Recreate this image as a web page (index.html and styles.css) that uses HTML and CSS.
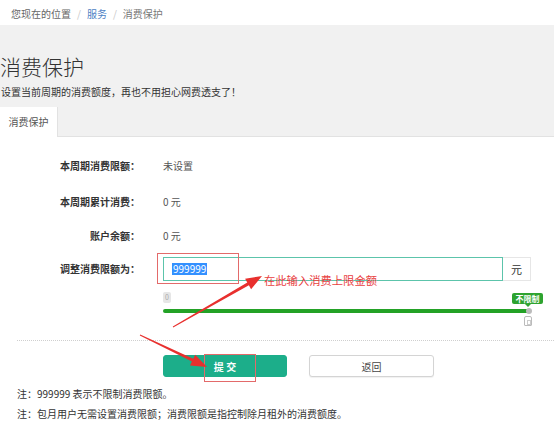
FILE: index.html
```html
<!DOCTYPE html>
<html lang="zh-CN">
<head>
<meta charset="utf-8">
<title>消费保护</title>
<link rel="stylesheet" href="styles.css">
</head>
<body>
<div class="page">
  <div class="crumb">
    <span class="c-here">您现在的位置</span><span class="c-sep">/</span><a class="c-link">服务</a><span class="c-sep">/</span><span class="c-cur">消费保护</span>
  </div>
  <div class="head">
    <h1 class="title">消费保护</h1>
    <p class="sub">设置当前周期的消费额度<span class="p">，</span>再也不用担心网费透支了<span class="p">！</span></p>
    <div class="tabs"><div class="tab">消费保护</div></div>
  </div>
  <div class="form">
    <div class="row r1"><div class="label">本周期消费限额<span class="p">：</span></div><div class="value">未设置</div></div>
    <div class="row r2"><div class="label">本周期累计消费<span class="p">：</span></div><div class="value">0 元</div></div>
    <div class="row r3"><div class="label">账户余额<span class="p">：</span></div><div class="value">0 元</div></div>
    <div class="row r4"><div class="label">调整消费限额为<span class="p">：</span></div>
      <div class="group">
        <div class="input"><span class="sel">999999</span></div>
        <div class="addon">元</div>
      </div>
    </div>
    <div class="slider">
      <div class="min">0</div>
      <div class="track"></div>
      <div class="dot"></div>
      <div class="tip">不限制</div>
      <div class="handle"></div>
    </div>
  </div>
  <div class="divider"></div>
  <div class="actions">
    <button class="btn primary">提 交</button>
    <button class="btn plain">返回</button>
  </div>
  <div class="notes">
    <p>注<span class="p">：</span>999999 表示不限制消费限额。</p>
    <p>注<span class="p">：</span>包月用户无需设置消费限额<span class="p">；</span>消费限额是指控制除月租外的消费额度。</p>
  </div>

  <div class="hint">在此输入消费上限金额</div>
  <svg class="marks" width="554" height="433" viewBox="0 0 554 433">
    <rect x="157.5" y="253.5" width="81" height="30" fill="none" stroke="#e36a6a" stroke-width="1"/>
    <rect x="204.5" y="354.5" width="51" height="27" fill="none" stroke="#e36a6a" stroke-width="1"/>
    <polygon fill="#e8302e" points="173.2,327.4 248.9,285.3 251.1,289.2 262,276 245.1,278.7 247.3,282.6 172.8,326.6"/>
    <polygon fill="#e8302e" points="139.8,335.4 191.9,361.5 190.0,365.5 207,367 195.2,354.7 193.3,358.7 140.2,334.6"/>
  </svg>
</div>
</body>
</html>
```

FILE: styles.css
```css
* { box-sizing: border-box; }
html, body { margin: 0; padding: 0; background: #fff; }
body {
  font-family: "Noto Sans CJK SC", "Microsoft YaHei", "Noto Sans", sans-serif;
  font-size: 10px;
  color: #333;
  width: 554px;
  height: 433px;
  overflow: hidden;
}
.page { position: relative; width: 554px; height: 433px; }
.p { font-family: "Noto Sans CJK TC", "Noto Sans CJK SC", sans-serif; }

.crumb {
  height: 25px;
  padding: 2px 0 0 11px;
  display: flex;
  align-items: center;
  font-size: 10px;
  color: #666;
}
.c-sep { color: #c8c8c8; padding: 0 6px; }
.c-link { color: #4d82c4; }
.c-cur { color: #777; }

.head {
  background: #f1f1f1;
  padding-top: 26px;
}
.title {
  margin: 0;
  font-size: 21px;
  line-height: 30px;
  font-weight: 300;
  color: #333;
}
.sub {
  margin: 4px 0 0 1px;
  font-size: 10px;
  line-height: 14px;
  color: #333;
}
.tabs {
  margin-top: 8px;
  display: flex;
  border-bottom: 1px solid #e2e2e2;
  height: 30px;
}
.tab {
  width: 58px;
  height: 30px;
  background: #fff;
  border-right: 1px solid #e2e2e2;
  color: #555;
  display: flex;
  align-items: center;
  justify-content: center;
  padding-bottom: 1px;
}

.form { padding-top: 11px; }
.row { display: flex; align-items: center; }
.r1 { height: 35px; }
.r2 { height: 36px; }
.r3 { height: 33px; }
.r4 { height: 33px; }
.label {
  width: 140px;
  text-align: right;
  font-weight: bold;
  color: #333;
}
.value { margin-left: 23px; color: #555; }

.group { margin-left: 23px; display: flex; height: 24px; }
.input {
  width: 340px;
  height: 24px;
  border: 1px solid #5cc4ab;
  padding-left: 8px;
  display: flex;
  align-items: center;
}
.sel {
  background: #3390ff;
  color: #fff;
  line-height: 12px;
  padding: 0 1px;
}
.addon {
  width: 28px;
  height: 24px;
  border: 1px solid #e6e6e6;
  border-left: none;
  display: flex;
  align-items: center;
  justify-content: center;
  font-size: 11px;
  color: #333;
}

.slider {
  position: relative;
  margin-left: 163px;
  width: 367px;
  height: 41px;
  padding-top: 7px;
}
.min {
  width: 8px;
  height: 11px;
  background: #e6e6e6;
  border-radius: 2px;
  color: #aaa;
  font-size: 7px;
  line-height: 11px;
  text-align: center;
}
.track {
  margin-top: 6px;
  width: 366px;
  height: 4px;
  background: #23a226;
  border-radius: 2px;
}
.dot {
  position: absolute;
  left: 363px;
  top: 23px;
  width: 6px;
  height: 6px;
  border-radius: 50%;
  background: #bbb;
}
.tip {
  position: absolute;
  left: 349px;
  top: 8px;
  width: 31px;
  height: 11px;
  background: #2ea32f;
  border-radius: 2px;
  color: #fff;
  font-size: 8px;
  font-weight: bold;
  line-height: 11px;
  text-align: center;
}
.tip::after {
  content: "";
  position: absolute;
  left: 13px;
  bottom: -3px;
  border-left: 3px solid transparent;
  border-right: 3px solid transparent;
  border-top: 3px solid #2ea32f;
}
.handle {
  position: absolute;
  left: 361px;
  top: 31px;
  width: 8px;
  height: 10px;
  border: 1px solid #bbb;
  border-radius: 2px 2px 1px 1px;
  background: #fff;
}
.handle::after {
  content: "";
  position: absolute;
  left: 2px;
  top: 3px;
  width: 2px;
  height: 3px;
  border: 1px solid #ccc;
}

.divider {
  margin: 14px 0 0 17px;
  border-top: 1px dotted #cfcfcf;
}
.actions {
  margin: 14px 0 0 163px;
  display: flex;
  gap: 22px;
}
.btn {
  width: 124px;
  height: 22px;
  border-radius: 3px;
  font-family: inherit;
  font-size: 10px;
  padding: 0;
  cursor: pointer;
}
.primary {
  background: #1cae8a;
  border: 1px solid #1cae8a;
  color: #fff;
  font-weight: bold;
}
.plain {
  width: 125px;
  background: #fff;
  border: 1px solid #d4d4d4;
  color: #444;
  box-shadow: 0 1px 1px rgba(0,0,0,0.06);
}

.notes { margin: 7px 0 0 17px; }
.notes p { margin: 0; line-height: 20px; color: #333; }

.hint {
  position: absolute;
  left: 264px;
  top: 272px;
  font-size: 11.3px;
  line-height: 16px;
  color: #e8413f;
}
.marks { position: absolute; left: 0; top: 0; pointer-events: none; }
```
